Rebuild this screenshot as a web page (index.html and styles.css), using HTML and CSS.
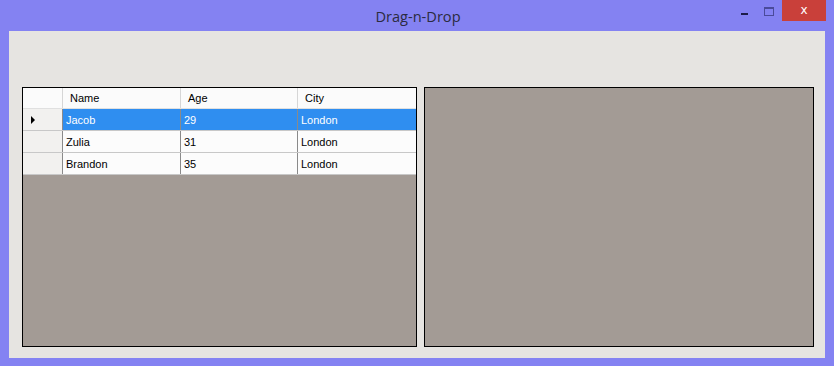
FILE: index.html
```html
<!DOCTYPE html>
<html>
<head>
<meta charset="utf-8">
<link rel="stylesheet" href="styles.css">
</head>
<body>
<div class="window">
  <div class="titlebar">
    <div class="title">Drag-n-Drop</div>
    <div class="controls">
      <div class="btn-min"><span class="min-glyph"></span></div>
      <div class="btn-max"><span class="max-glyph"></span></div>
      <div class="btn-close">x</div>
    </div>
  </div>
  <div class="client">
    <div class="panel grid">
      <div class="row header">
        <div class="rh"></div>
        <div class="cell">Name</div>
        <div class="cell">Age</div>
        <div class="cell last">City</div>
      </div>
      <div class="row selected">
        <div class="rh"><span class="arrow"></span></div>
        <div class="cell">Jacob</div>
        <div class="cell">29</div>
        <div class="cell last">London</div>
      </div>
      <div class="row">
        <div class="rh"></div>
        <div class="cell">Zulia</div>
        <div class="cell">31</div>
        <div class="cell last">London</div>
      </div>
      <div class="row">
        <div class="rh"></div>
        <div class="cell">Brandon</div>
        <div class="cell">35</div>
        <div class="cell last">London</div>
      </div>
    </div>
    <div class="panel target"></div>
  </div>
</div>
</body>
</html>
```
FILE: styles.css
```css
html, body {
  margin: 0;
  padding: 0;
}
body {
  width: 834px;
  height: 366px;
  background: #8482f2;
  overflow: hidden;
  font-family: "Liberation Sans", Arial, sans-serif;
}
.window {
  display: flex;
  flex-direction: column;
  height: 366px;
}
.titlebar {
  height: 31px;
  position: relative;
  display: flex;
  justify-content: center;
  align-items: flex-start;
}
.title {
  margin-top: 6px;
  margin-left: 2px;
  font-family: "Open Sans", "DejaVu Sans", sans-serif;
  font-size: 14.6px;
  color: #2b2b40;
}
.controls {
  position: absolute;
  top: 0;
  right: 8px;
  display: flex;
  align-items: flex-start;
}
.btn-min {
  width: 20px;
  height: 21px;
  position: relative;
}
.min-glyph {
  position: absolute;
  left: 1px;
  top: 13px;
  width: 7px;
  height: 2px;
  background: #1c1c48;
}
.btn-max {
  width: 22px;
  height: 21px;
  position: relative;
}
.max-glyph {
  position: absolute;
  left: 4px;
  top: 7px;
  width: 8px;
  height: 6px;
  border: 1px solid #4a4a9a;
  border-top-width: 2px;
}
.btn-close {
  width: 44px;
  height: 21px;
  background: #c9403a;
  color: #ffffff;
  font-family: "DejaVu Sans", sans-serif;
  font-size: 12px;
  line-height: 20px;
  text-align: center;
}
.client {
  margin: 0 9px 8px 9px;
  height: 327px;
  background: #e6e4e1;
  box-sizing: border-box;
  padding: 56px 11px 0 13px;
  display: flex;
  gap: 7px;
  align-items: flex-start;
}
.panel {
  height: 260px;
  box-sizing: border-box;
  border: 1px solid #000000;
  background: #a39b95;
}
.grid {
  width: 395px;
  display: flex;
  flex-direction: column;
}
.target {
  width: 390px;
}
.row {
  display: flex;
  height: 22px;
  background: #fcfcfc;
  border-bottom: 1px solid #c8c8c8;
  box-sizing: border-box;
  font-size: 11px;
  color: #000;
}
.row.header {
  height: 21px;
  background: #fbfbfb;
  border-bottom: 1px solid #e0e0e0;
}
.rh {
  width: 40px;
  flex: none;
  box-sizing: border-box;
  border-right: 1px solid #8a8a8a;
  background: #f2f1ef;
  position: relative;
}
.header .rh {
  border-right: 1px solid #d6d6d6;
  background: #fbfbfb;
}
.cell {
  width: 118px;
  flex: none;
  box-sizing: border-box;
  border-right: 1px solid #8a8a8a;
  padding-left: 3px;
  display: flex;
  align-items: center;
  padding-top: 1px;
}
.header .cell {
  padding-top: 0;
  padding-bottom: 1px;
}
.cell:nth-child(3) {
  width: 117px;
}
.cell.last {
  width: 118px;
  border-right: none;
}
.header .cell {
  border-right: 1px solid #d6d6d6;
  padding-left: 7px;
}
.header .cell.last {
  border-right: none;
}
.selected {
  background: #2f8ef0;
  color: #ffffff;
}
.selected .rh {
  background: #f2f1ef;
}
.arrow {
  position: absolute;
  left: 8px;
  top: 7px;
  width: 0;
  height: 0;
  border-top: 4px solid transparent;
  border-bottom: 4px solid transparent;
  border-left: 4px solid #000;
}
```
